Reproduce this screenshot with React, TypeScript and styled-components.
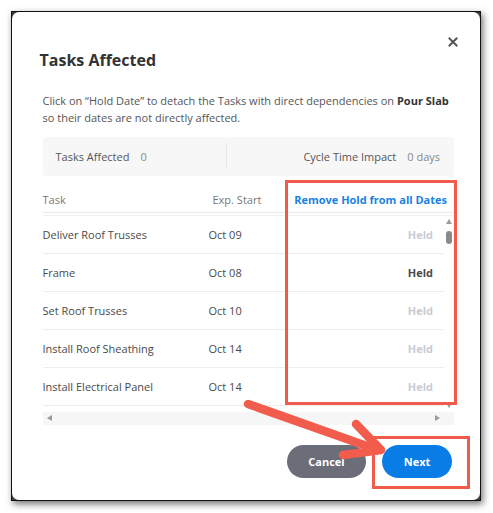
import React from 'react';
import styled, { createGlobalStyle } from 'styled-components';

const Global = createGlobalStyle`
  html, body { margin: 0; padding: 0; background: #fff; }
  body { font-family: "Open Sans", "Liberation Sans", sans-serif; }
  * { box-sizing: border-box; }
`;

const Page = styled.div`
  position: relative;
  width: 493px;
  height: 513px;
  padding: 11px 0 0 11px;
`;

const Frame = styled.div`
  width: 470px;
  height: 490px;
  border: 1.5px solid #111;
  background: #3c3c3c;
  box-shadow: 2px 3px 7px rgba(0, 0, 0, 0.55);
  display: flex;
`;

const Modal = styled.div`
  flex: 1;
  background: #fff;
  border-radius: 7px;
  display: flex;
  flex-direction: column;
  padding: 22px 26px 0 30.5px;
`;

const HeaderRow = styled.div`
  display: flex;
  justify-content: space-between;
  align-items: flex-start;
`;

const Title = styled.h1`
  margin: 14.5px 0 0 -3px;
  font-size: 16px;
  line-height: 22px;
  font-weight: 700;
  color: #333;
`;

const CloseButton = styled.button`
  border: none;
  background: none;
  padding: 0;
  margin-right: -5px;
  width: 12px;
  height: 16px;
  display: flex;
  align-items: center;
  justify-content: center;
`;

const Description = styled.p`
  margin: 21.5px 0 0;
  font-size: 11px;
  line-height: 17px;
  color: #555;
  b { font-weight: 700; color: #333; }
`;

const Summary = styled.div`
  margin-top: 10.5px;
  height: 39px;
  background: #f7f7f8;
  border-radius: 4px;
  display: flex;
  align-items: center;
  font-size: 11px;
  color: #555;
`;

const SummaryItem = styled.div<{ $grow?: boolean }>`
  display: flex;
  gap: 11px;
  padding: 0 14px 0 13px;
  width: ${p => (p.$grow ? 'auto' : '183px')};
  flex: ${p => (p.$grow ? '1' : 'none')};
  justify-content: ${p => (p.$grow ? 'flex-end' : 'flex-start')};
`;

const SummaryValue = styled.span`
  color: #888;
`;

const Divider = styled.div`
  width: 1px;
  height: 26px;
  background: #e6e6e6;
`;

const Table = styled.div`
  display: flex;
  flex-direction: column;
`;

const HeadRow = styled.div`
  display: grid;
  grid-template-columns: 166px 1fr auto;
  align-items: center;
  padding: 16px 7px 4px 0;
  border-bottom: 1px solid #ebebeb;
  font-size: 11px;
  line-height: 16px;
  color: #777;
`;

const HeadCell = styled.span<{ $indent?: number }>`
  padding-left: ${p => p.$indent ?? 0}px;
`;

const HeadAction = styled.span`
  color: #1a82e2;
  font-weight: 700;
`;

const BodyWrap = styled.div`
  margin-top: 2px;
  border-top: 1px solid #f2f2f2;
  display: flex;
  height: 196px;
  overflow: hidden;
`;

const Rows = styled.div`
  flex: 1;
  display: flex;
  flex-direction: column;
`;

const Row = styled.div`
  display: grid;
  grid-template-columns: 166px 1fr auto;
  align-items: center;
  height: 38px;
  flex: none;
  padding-right: 11px;
  border-bottom: 1px solid #ededed;
  font-size: 11px;
  color: #4a4a4a;
`;

const Held = styled.span<{ $active?: boolean }>`
  font-weight: 700;
  color: ${p => (p.$active ? '#4a4a4a' : '#c8ccd3')};
`;

const VScroll = styled.div`
  width: 10px;
  display: flex;
  flex-direction: column;
  align-items: center;
  padding: 3px 0 3px;
`;

const Thumb = styled.div`
  width: 6px;
  height: 13px;
  border-radius: 3px;
  background: #8a8a8a;
  margin-top: 7px;
`;

const Spacer = styled.div`
  flex: 1;
`;

const Tri = styled.div<{ $dir: 'up' | 'down' | 'left' | 'right' }>`
  width: 0;
  height: 0;
  ${p =>
    p.$dir === 'up'
      ? 'border-left:3.5px solid transparent;border-right:3.5px solid transparent;border-bottom:5px solid #9a9a9a;'
      : p.$dir === 'down'
      ? 'border-left:3.5px solid transparent;border-right:3.5px solid transparent;border-top:5px solid #9a9a9a;'
      : p.$dir === 'left'
      ? 'border-top:3.5px solid transparent;border-bottom:3.5px solid transparent;border-right:5px solid #9a9a9a;'
      : 'border-top:3.5px solid transparent;border-bottom:3.5px solid transparent;border-left:5px solid #9a9a9a;'}
`;

const HScroll = styled.div`
  height: 13px;
  margin-top: 1px;
  background: #f6f6f7;
  display: flex;
  align-items: center;
  padding: 0 14px 0 4px;
  justify-content: space-between;
`;

const Footer = styled.div`
  margin-top: 20px;
  display: flex;
  justify-content: flex-end;
  gap: 16px;
  padding-right: 2px;
`;

const Button = styled.button<{ $primary?: boolean }>`
  height: 33px;
  width: ${p => (p.$primary ? '70px' : '79px')};
  border: none;
  border-radius: 17px;
  background: ${p => (p.$primary ? '#0a7ce6' : '#6b6d78')};
  color: #fff;
  font-family: "Open Sans", sans-serif;
  font-weight: 700;
  font-size: 11px;
`;

const Highlight = styled.div<{ $x: number; $y: number; $w: number; $h: number }>`
  position: absolute;
  left: ${p => p.$x}px;
  top: ${p => p.$y}px;
  width: ${p => p.$w}px;
  height: ${p => p.$h}px;
  border: 3px solid #f25a4b;
  pointer-events: none;
`;

const ArrowLayer = styled.svg`
  position: absolute;
  left: 0;
  top: 0;
  pointer-events: none;
`;

const tasks = [
  { name: 'Deliver Roof Trusses', date: 'Oct 09', active: false },
  { name: 'Frame', date: 'Oct 08', active: true },
  { name: 'Set Roof Trusses', date: 'Oct 10', active: false },
  { name: 'Install Roof Sheathing', date: 'Oct 14', active: false },
  { name: 'Install Electrical Panel', date: 'Oct 14', active: false },
];

export default function App() {
  return (
    <Page>
      <Global />
      <Frame>
        <Modal>
          <HeaderRow>
            <Title>Tasks Affected</Title>
            <CloseButton aria-label="Close">
              <svg width="10" height="10" viewBox="0 0 10 10">
                <path d="M1.5 1.5 L8.5 8.5 M8.5 1.5 L1.5 8.5" stroke="#555" strokeWidth="2" strokeLinecap="square" />
              </svg>
            </CloseButton>
          </HeaderRow>
          <Description>
            Click on “Hold Date” to detach the Tasks with direct dependencies on <b>Pour Slab</b> so their
            dates are not directly affected.
          </Description>
          <Summary>
            <SummaryItem>
              <span>Tasks Affected</span>
              <SummaryValue>0</SummaryValue>
            </SummaryItem>
            <Divider />
            <SummaryItem $grow>
              <span>Cycle Time Impact</span>
              <SummaryValue>0 days</SummaryValue>
            </SummaryItem>
          </Summary>
          <Table>
            <HeadRow>
              <HeadCell>Task</HeadCell>
              <HeadCell $indent={4}>Exp. Start</HeadCell>
              <HeadAction>Remove Hold from all Dates</HeadAction>
            </HeadRow>
            <BodyWrap>
              <Rows>
                {tasks.map(t => (
                  <Row key={t.name}>
                    <span>{t.name}</span>
                    <span>{t.date}</span>
                    <Held $active={t.active}>Held</Held>
                  </Row>
                ))}
              </Rows>
              <VScroll>
                <Tri $dir="up" />
                <Thumb />
                <Spacer />
                <Tri $dir="down" />
              </VScroll>
            </BodyWrap>
            <HScroll>
              <Tri $dir="left" />
              <Tri $dir="right" />
            </HScroll>
          </Table>
          <Footer>
            <Button>Cancel</Button>
            <Button $primary>Next</Button>
          </Footer>
        </Modal>
      </Frame>
      <Highlight $x={285} $y={180} $w={172} $h={225} />
      <Highlight $x={372} $y={436} $w={98} $h={53} />
      <ArrowLayer width="493" height="513" viewBox="0 0 493 513">
        <g stroke="#f25c4d" strokeWidth="8.5" strokeLinecap="round" strokeLinejoin="round" fill="none">
          <path d="M248 404 L378 450" />
          <path d="M356 424 L381 450 L343 455" />
        </g>
      </ArrowLayer>
    </Page>
  );
}
